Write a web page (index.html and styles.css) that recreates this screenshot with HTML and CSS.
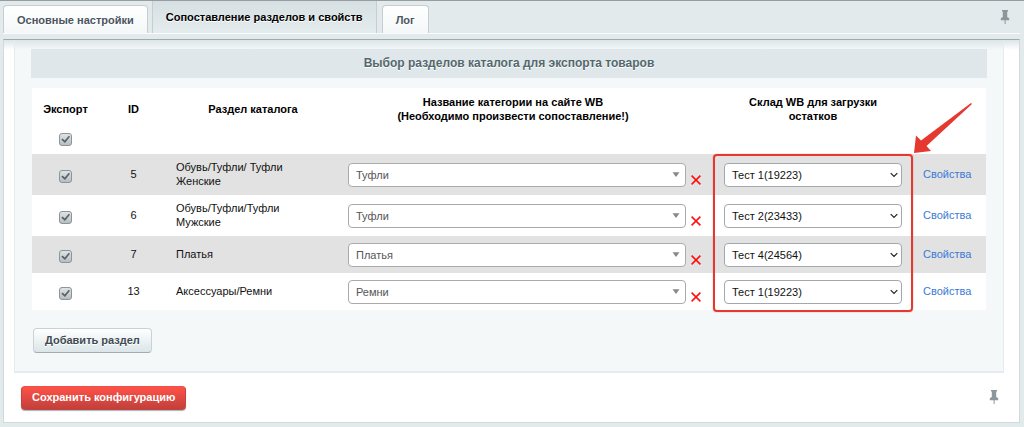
FILE: index.html
```html
<!DOCTYPE html>
<html lang="ru">
<head>
<meta charset="utf-8">
<title>Сопоставление разделов и свойств</title>
<link rel="stylesheet" href="styles.css">
</head>
<body>
<svg class="defs" aria-hidden="true">
  <symbol id="pin" viewBox="0 0 10 15"><path d="M2 0h6v1.600h-.8v5.400l2 1.200v2H5.600V14H4.600v-3.800H.8v-2l2-1.200V1.600H2z"/></symbol>
  <symbol id="caret" viewBox="0 0 8 5"><path d="M.5.300h7L4 5z"/></symbol>
  <symbol id="chevron" viewBox="0 0 8 6"><path d="M.7 1.200 4 4.500l3.300-3.300" fill="none" stroke="#222" stroke-width="1.200"/></symbol>
  <symbol id="cross" viewBox="0 0 10 10"><path d="M.6.600l8.800 8.800M9.400.600.6 9.400" fill="none" stroke="#ff0d0d" stroke-width="1.500"/></symbol>
</svg>

<nav class="tabs">
  <button class="tab" type="button">Основные настройки</button>
  <button class="tab tab-active" type="button">Сопоставление разделов и свойств</button>
  <button class="tab" type="button">Лог</button>
  <button class="pin" type="button" aria-label="Закрепить вкладки"><svg><use href="#pin"/></svg></button>
</nav>

<main class="panel">
  <section class="content">
    <h2 class="heading">Выбор разделов каталога для экспорта товаров</h2>
    <div class="table-wrap">
      <table class="sections">
        <colgroup>
          <col class="c-export"><col class="c-id"><col class="c-section"><col><col class="c-remove"><col class="c-stock"><col class="c-props">
        </colgroup>
        <thead>
          <tr>
            <th>Экспорт</th><th>ID</th><th>Раздел каталога</th>
            <th>Название категории на сайте WB<br>(Необходимо произвести сопоставление!)</th>
            <th></th><th>Склад WB для загрузки<br>остатков</th><th></th>
          </tr>
          <tr class="all">
            <td class="check"><input type="checkbox" checked aria-label="Экспортировать все"></td>
            <td colspan="6"></td>
          </tr>
        </thead>
        <tbody>
          <tr>
            <td class="check"><input type="checkbox" checked aria-label="Экспорт раздела 5"></td>
            <td class="id">5</td>
            <td class="name">Обувь/Туфли/ Туфли Женские</td>
            <td class="category"><span class="field"><select aria-label="Категория WB"><option>Туфли</option></select><svg class="caret"><use href="#caret"/></svg></span></td>
            <td class="remove"><button type="button" aria-label="Удалить"><svg><use href="#cross"/></svg></button></td>
            <td class="stock"><span class="field"><select aria-label="Склад WB"><option>Тест 1(19223)</option></select><svg class="chevron"><use href="#chevron"/></svg></span></td>
            <td class="props"><a href="#">Свойства</a></td>
          </tr>
          <tr>
            <td class="check"><input type="checkbox" checked aria-label="Экспорт раздела 6"></td>
            <td class="id">6</td>
            <td class="name">Обувь/Туфли/Туфли Мужские</td>
            <td class="category"><span class="field"><select aria-label="Категория WB"><option>Туфли</option></select><svg class="caret"><use href="#caret"/></svg></span></td>
            <td class="remove"><button type="button" aria-label="Удалить"><svg><use href="#cross"/></svg></button></td>
            <td class="stock"><span class="field"><select aria-label="Склад WB"><option>Тест 2(23433)</option></select><svg class="chevron"><use href="#chevron"/></svg></span></td>
            <td class="props"><a href="#">Свойства</a></td>
          </tr>
          <tr>
            <td class="check"><input type="checkbox" checked aria-label="Экспорт раздела 7"></td>
            <td class="id">7</td>
            <td class="name">Платья</td>
            <td class="category"><span class="field"><select aria-label="Категория WB"><option>Платья</option></select><svg class="caret"><use href="#caret"/></svg></span></td>
            <td class="remove"><button type="button" aria-label="Удалить"><svg><use href="#cross"/></svg></button></td>
            <td class="stock"><span class="field"><select aria-label="Склад WB"><option>Тест 4(24564)</option></select><svg class="chevron"><use href="#chevron"/></svg></span></td>
            <td class="props"><a href="#">Свойства</a></td>
          </tr>
          <tr>
            <td class="check"><input type="checkbox" checked aria-label="Экспорт раздела 13"></td>
            <td class="id">13</td>
            <td class="name">Аксессуары/Ремни</td>
            <td class="category"><span class="field"><select aria-label="Категория WB"><option>Ремни</option></select><svg class="caret"><use href="#caret"/></svg></span></td>
            <td class="remove"><button type="button" aria-label="Удалить"><svg><use href="#cross"/></svg></button></td>
            <td class="stock"><span class="field"><select aria-label="Склад WB"><option>Тест 1(19223)</option></select><svg class="chevron"><use href="#chevron"/></svg></span></td>
            <td class="props"><a href="#">Свойства</a></td>
          </tr>
        </tbody>
      </table>
      <div class="highlight"></div>
      <svg class="arrow" viewBox="0 0 58 50" aria-hidden="true"><path d="M57 0 58 1 12.500 43 17 48 0 50 2 32.500 7 37.500z"/></svg>
    </div>
    <button class="add" type="button">Добавить раздел</button>
  </section>
  <footer class="actions">
    <button class="save" type="button">Сохранить конфигурацию</button>
    <button class="pin" type="button" aria-label="Закрепить панель"><svg><use href="#pin"/></svg></button>
  </footer>
</main>
</body>
</html>
```
FILE: styles.css
```css
* { box-sizing: border-box; }

body {
  margin: 0;
  padding: 0 4px 5px 3px;
  border-top: 1px solid #979ca0;
  background: #e2eaec;
  color: #111;
  font: 11px/14px "Liberation Sans", Arial, sans-serif;
}

button, select { font: inherit; }
.defs { display: none; }

.tabs {
  display: flex;
  align-items: flex-end;
  height: 33px;
  border-bottom: 1px solid #fafcfc;
}

.tab {
  height: 28px;
  padding: 0 13px;
  border: 1px solid #c6ced1;
  border-bottom: 0;
  border-radius: 4px 4px 0 0;
  background: linear-gradient(#fff, #f4f7f8);
  color: #4a5560;
  font-weight: bold;
  text-shadow: 0 1px #fff;
}

.tab-active {
  height: 32px;
  margin: 0 5px 0 4px;
  border-top: 0;
  border-radius: 0;
  background: linear-gradient(#d6dfe2, #e4ecee);
  color: #000;
}

.pin {
  width: 10px;
  height: 15px;
  margin-left: auto;
  padding: 0;
  border: 0;
  background: none;
}

.pin svg { display: block; width: 10px; height: 15px; fill: #8d979b; }
.tabs .pin { align-self: center; margin-right: 10px; }

.panel {
  margin-top: 5px;
  padding: 0 15px 0 10px;
  border: 1px solid #d0d9dc;
  border-top: 1px solid #a1a9ac;
  background: linear-gradient(#dde5e7, #fff 10px);
}

.content {
  padding: 9px 16px 18px;
  border: 1px solid #e3edef;
  border-top: 0;
  border-bottom-width: 2px;
  background: linear-gradient(#dde5e7, #f4f8f9 10px);
}

.heading {
  margin: 0 0 10px;
  padding: 7px 0 8px;
  background: #dfe7ea;
  color: #53686c;
  font-size: 12px;
  line-height: 14px;
  text-align: center;
  text-shadow: 0 1px #fff;
}

.table-wrap { position: relative; margin: 0 1px; }

.sections {
  width: 100%;
  table-layout: fixed;
  border-collapse: collapse;
  background: #fff;
}

.c-export { width: 67px; }
.c-id { width: 69px; }
.c-section { width: 170px; }
.c-remove { width: 26px; }
.c-stock { width: 198px; }
.c-props { width: 74px; }

th { height: 41px; padding: 0; color: #000; }
td { height: 37px; padding: 0; }
.all td { height: 25px; }
tbody tr:nth-child(odd) { background: #e2e2e2; }
.check, .id { text-align: center; }
.check { padding-top: 4px; }
.all .check { padding: 0 0 4px; }
.id, .props { padding-bottom: 1px; }
.name { padding: 6px 40px 7px 8px; }
.category { padding: 0 2px 0 10px; }
.remove { padding: 10px 0 0 3px; }
.stock { padding: 0 10px; }
.props { padding-left: 11px; }
.props a { color: #3a7bd5; text-decoration: none; }

input[type="checkbox"] {
  appearance: none;
  display: block;
  width: 13px;
  height: 13px;
  margin: 0 auto;
  border: 1px solid #8d9497;
  border-radius: 3px;
  background: linear-gradient(#dfe3e5, #b7bec2);
}

input[type="checkbox"]::before {
  content: "";
  display: block;
  width: 11px;
  height: 11px;
  background: #5a6266;
  clip-path: polygon(12% 52%, 24% 42%, 43% 60%, 80% 16%, 91% 24%, 45% 82%);
}

.field { position: relative; display: block; }

.field select {
  appearance: none;
  display: block;
  width: 100%;
  height: 24px;
  padding: 0 24px 0 7px;
  border: 1px solid #aaa;
  border-radius: 4px;
  background: #fff;
  color: #555;
}

.stock select { border-color: #a2a8ab; color: #111; }
.field svg { position: absolute; pointer-events: none; }
.caret { top: 9px; right: 6px; width: 8px; height: 5px; fill: #888; }
.chevron { top: 9px; right: 4px; width: 8px; height: 6px; }

.remove button {
  display: block;
  width: 10px;
  height: 10px;
  margin: 0;
  padding: 0;
  border: 0;
  background: none;
}

.remove svg { display: block; width: 10px; height: 10px; }

/* Marker around the warehouse column */
.highlight {
  position: absolute;
  top: 66px;
  right: 73px;
  bottom: -2px;
  width: 200px;
  border: 2px solid #e5392f;
  border-radius: 4px;
  box-shadow: 0 0 1px #e5392f;
  pointer-events: none;
}

.arrow {
  position: absolute;
  top: 15px;
  right: 14px;
  width: 58px;
  height: 50px;
  fill: #e5392f;
  pointer-events: none;
}

.add, .save {
  display: block;
  border-radius: 4px;
  font-weight: bold;
}

.add {
  height: 25px;
  margin: 18px 0 0 2px;
  padding: 0 11px 1px;
  border: 1px solid #c9d3d6;
  border-bottom-color: #a3adb1;
  background: linear-gradient(#fff, #dbe5e8);
  color: #3f4b54;
  text-shadow: 0 1px #fff;
}

.actions {
  display: flex;
  align-items: center;
  height: 49px;
  padding-left: 7px;
}

.save {
  height: 24px;
  padding: 0 10px 2px;
  border: 1px solid #c8433e;
  border-top-color: #e9524b;
  background: linear-gradient(#ff5147, #c1403c);
  box-shadow: 0 1px 1px #aab4b7;
  color: #fff;
}

.actions .pin { margin-right: 5px; }
```
